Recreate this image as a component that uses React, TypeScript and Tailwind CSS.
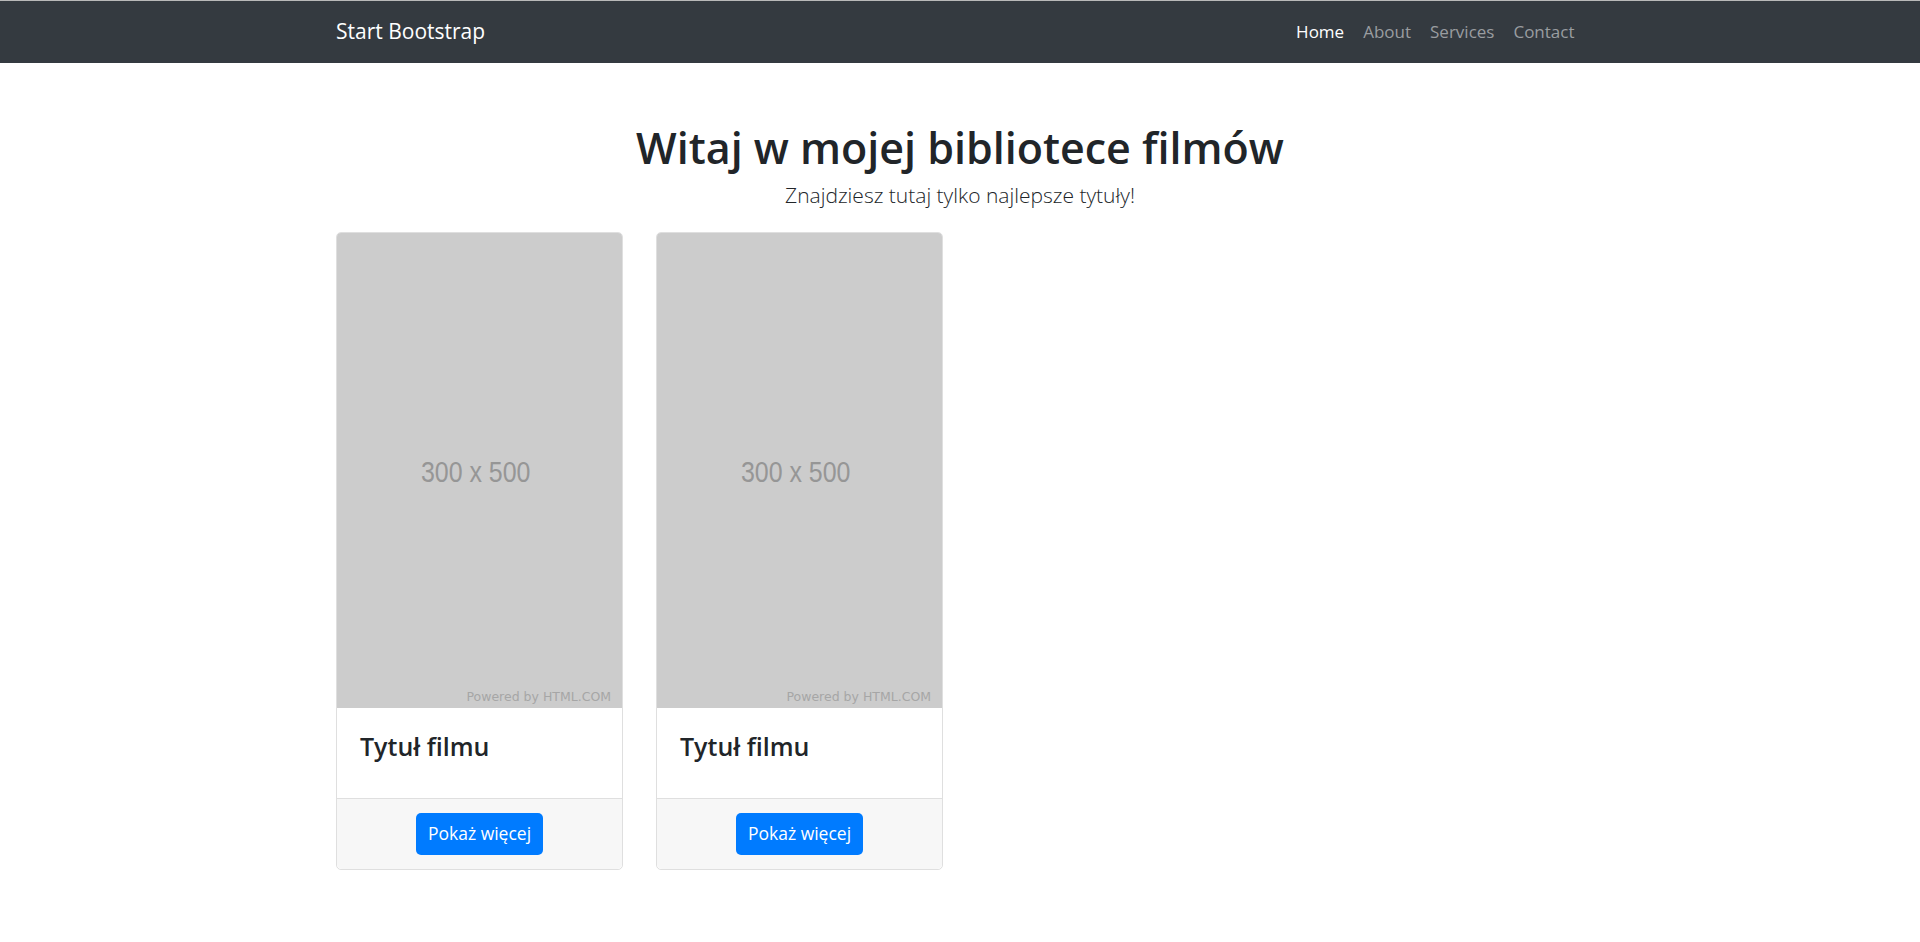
import React from "react";

const movies = [{ id: 1, title: "Tytuł filmu" }, { id: 2, title: "Tytuł filmu" }];

function Placeholder() {
  return (
    <div className="relative h-[475px] w-full bg-[#cccccc] rounded-t-[4px] flex items-center justify-center">
      <span className="text-[29px] text-[#969696] scale-x-[0.86] -translate-x-[4px] translate-y-[2px] font-['Liberation_Sans',Arial,sans-serif]">
        300 x 500
      </span>
      <span className="absolute right-[11px] bottom-[5px] text-[12.5px] leading-none text-[#a6a6a6] font-['DejaVu_Sans',Verdana,sans-serif]">
        Powered by HTML.COM
      </span>
    </div>
  );
}

function MovieCard({ title }: { title: string }) {
  return (
    <div className="w-[287px] border border-[#dfdfdf] rounded-[5px] bg-white flex flex-col">
      <Placeholder />
      <div className="h-[90px] pl-[23px] pt-[23px]">
        <h3 className="text-[25px] leading-[1.2] font-semibold text-[#212529]">{title}</h3>
      </div>
      <div className="h-[71px] border-t border-[#dfdfdf] bg-[#f7f7f7] rounded-b-[5px] flex items-center justify-center">
        <button className="h-[42px] px-[12px] rounded-[5px] bg-[#007bff] text-white text-[17.5px] leading-none">
          Pokaż więcej
        </button>
      </div>
    </div>
  );
}

export default function App() {
  const links = ["Home", "About", "Services", "Contact"];
  return (
    <div className="min-h-screen bg-white font-['Open_Sans',sans-serif] text-[#212529]">
      <nav className="border-t border-[#b9b9b9] bg-[#343a40] h-[63px]">
        <div className="w-[1248px] mx-auto h-full flex items-center justify-between">
          <a className="text-[21px] leading-[1.5] text-white">Start Bootstrap</a>
          <ul className="flex">
            {links.map((l, i) => (
              <li key={l}>
                <a className={"px-[9.5px] text-[17px] leading-[1.5] " + (i === 0 ? "text-white" : "text-[#9a9da0]")}>{l}</a>
              </li>
            ))}
          </ul>
        </div>
      </nav>

      <main className="w-[1248px] mx-auto">
        <div className="text-center pt-[59px]">
          <h1 className="text-[43px] leading-[1.2] font-semibold">Witaj w mojej bibliotece filmów</h1>
          <p className="mt-[6px] text-[21px] leading-[1.5] font-light">Znajdziesz tutaj tylko najlepsze tytuły!</p>
        </div>
        <div className="mt-[21px] flex gap-[33px]">
          {movies.map((m) => (
            <MovieCard key={m.id} title={m.title} />
          ))}
        </div>
      </main>
    </div>
  );
}
